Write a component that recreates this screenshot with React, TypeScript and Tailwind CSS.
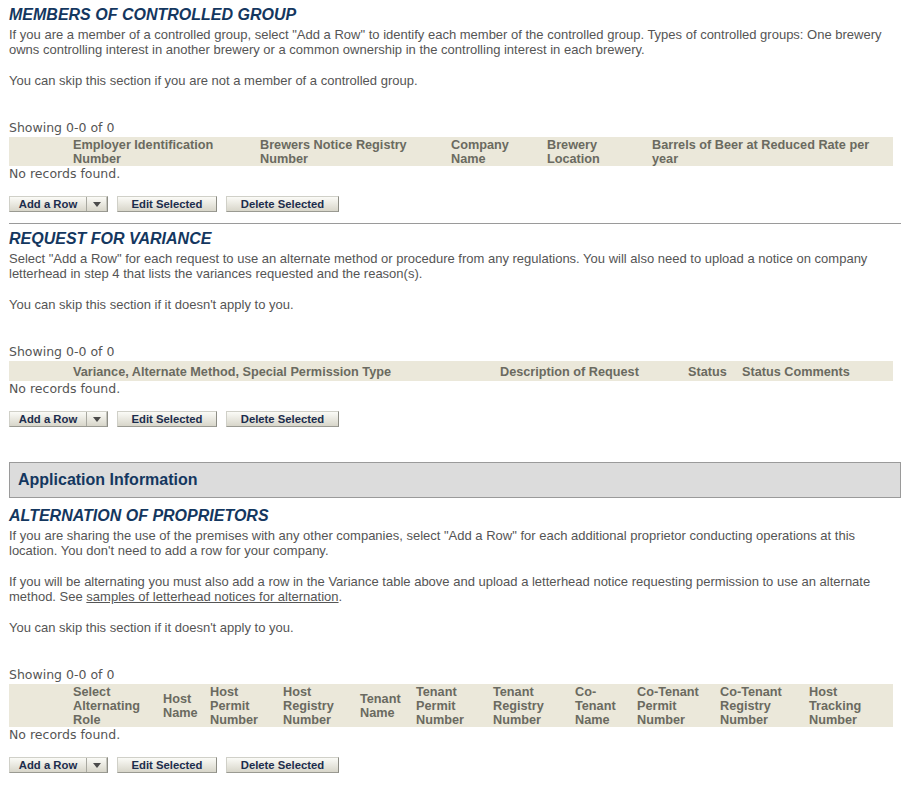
import type { ReactNode } from "react";

type Col = { w: number; label: ReactNode };

const controlledCols: Col[] = [
  { w: 64, label: "" },
  { w: 187, label: "Employer Identification Number" },
  { w: 191, label: "Brewers Notice Registry Number" },
  { w: 96, label: "Company Name" },
  { w: 105, label: "Brewery Location" },
  { w: 241, label: "Barrels of Beer at Reduced Rate per year" },
];

const varianceCols: Col[] = [
  { w: 64, label: "" },
  { w: 427, label: "Variance, Alternate Method, Special Permission Type" },
  { w: 188, label: "Description of Request" },
  { w: 54, label: "Status" },
  { w: 151, label: "Status Comments" },
];

const alternationCols: Col[] = [
  { w: 64, label: "" },
  { w: 90, label: "Select Alternating Role" },
  { w: 47, label: "Host Name" },
  { w: 73, label: "Host Permit Number" },
  { w: 77, label: "Host Registry Number" },
  { w: 56, label: "Tenant Name" },
  { w: 77, label: "Tenant Permit Number" },
  { w: 82, label: "Tenant Registry Number" },
  { w: 62, label: "Co-Tenant Name" },
  { w: 83, label: "Co-Tenant Permit Number" },
  { w: 89, label: "Co-Tenant Registry Number" },
  { w: 84, label: "Host Tracking Number" },
];

function Title({ children }: { children: ReactNode }) {
  return (
    <h2 className="text-[16px] leading-[19px] font-bold italic text-[#14375f]">{children}</h2>
  );
}

function Para({ children, first }: { children: ReactNode; first?: boolean }) {
  return (
    <p className={`${first ? "mt-[3px]" : "mt-[16px]"} text-[13px] leading-[15px] text-[#555555]`}>
      {children}
    </p>
  );
}

function Btn({ children, w }: { children: ReactNode; w: number }) {
  return (
    <button
      style={{ width: w }}
      className="h-[16px] flex items-center justify-center border border-t-[#d0d0c8] border-l-[#d0d0c8] border-r-[#8c8c84] border-b-[#9a9a92] bg-linear-to-b from-[#fbfbf7] to-[#d8d6ca] text-[11.3px] leading-[14px] font-bold text-[#1c2d4d]"
    >
      {children}
    </button>
  );
}

function ActionBar() {
  return (
    <div className="flex gap-[9px] mt-[15px]">
      <div className="h-[16px] w-[99px] flex border border-t-[#d0d0c8] border-l-[#d0d0c8] border-r-[#8c8c84] border-b-[#9a9a92] bg-linear-to-b from-[#fbfbf7] to-[#d8d6ca] text-[11.3px] leading-[14px] font-bold text-[#1c2d4d]">
        <span className="w-[76px] flex items-center justify-center">Add a Row</span>
        <span className="w-px bg-[#a8a8a0]" />
        <span className="flex-1 flex items-center justify-center border-r border-[#c4c4bc]">
          <svg width="8" height="5" viewBox="0 0 8 5">
            <path d="M0 0h8L4 5z" fill="#4a4a4a" />
          </svg>
        </span>
      </div>
      <Btn w={100}>Edit Selected</Btn>
      <Btn w={113}>Delete Selected</Btn>
    </div>
  );
}

function Grid({ cols, single }: { cols: Col[]; single?: boolean }) {
  return (
    <div>
      <p className="mt-[32px] font-['DejaVu_Sans',Verdana,sans-serif] text-[12.5px] leading-[15px] text-[#555555]">
        Showing 0-0 of 0
      </p>
      <table className="mt-[2px] w-[884px] table-fixed border-collapse">
        <colgroup>
          {cols.map((c, i) => (
            <col key={i} style={{ width: c.w }} />
          ))}
        </colgroup>
        <thead>
          <tr className={`bg-[#ebe8da] ${single ? "h-[20px]" : ""}`}>
            {cols.map((c, i) => (
              <th
                key={i}
                className="pt-px pr-[8px] text-left align-middle text-[12.7px] leading-[14px] font-bold text-[#6a6a60]"
              >
                {c.label}
              </th>
            ))}
          </tr>
        </thead>
      </table>
      <p className="font-['DejaVu_Sans',Verdana,sans-serif] text-[12.5px] leading-[15px] text-[#555555]">
        No records found.
      </p>
      <ActionBar />
    </div>
  );
}

export default function App() {
  return (
    <div className="w-[916px] min-h-[785px] bg-white pl-[9px] pr-[15px] pt-[5px] font-['Liberation_Sans',Arial,sans-serif]">
      {/* Controlled group */}
      <section>
        <Title>MEMBERS OF CONTROLLED GROUP</Title>
        <Para first>
          If you are a member of a controlled group, select "Add a Row" to identify each member of the controlled
          group. Types of controlled groups: One brewery owns controlling interest in another brewery or a common
          ownership in the controlling interest in each brewery.
        </Para>
        <Para>You can skip this section if you are not a member of a controlled group.</Para>
        <Grid cols={controlledCols} />
      </section>

      <hr className="mt-[11px] border-0 border-t border-[#9a9a9a]" />

      {/* Variance */}
      <section className="mt-[5px]">
        <Title>REQUEST FOR VARIANCE</Title>
        <Para first>
          Select "Add a Row" for each request to use an alternate method or procedure from any regulations. You will
          also need to upload a notice on company letterhead in step 4 that lists the variances requested and the
          reason(s).
        </Para>
        <Para>You can skip this section if it doesn't apply to you.</Para>
        <Grid cols={varianceCols} single />
      </section>

      <div className="mt-[35px] h-[36px] flex items-center px-[8px] border border-[#9a9a9a] bg-[#dcdcdc]">
        <h1 className="text-[16px] font-bold text-[#14375f]">Application Information</h1>
      </div>

      {/* Alternation */}
      <section className="mt-[8px]">
        <Title>ALTERNATION OF PROPRIETORS</Title>
        <Para first>
          If you are sharing the use of the premises with any other companies, select "Add a Row" for each additional
          proprietor conducting operations at this location. You don't need to add a row for your company.
        </Para>
        <Para>
          If you will be alternating you must also add a row in the Variance table above and upload a letterhead
          notice requesting permission to use an alternate method. See{" "}
          <a className="underline text-[#555555]">samples of letterhead notices for alternation</a>.
        </Para>
        <Para>You can skip this section if it doesn't apply to you.</Para>
        <Grid cols={alternationCols} />
      </section>
    </div>
  );
}
